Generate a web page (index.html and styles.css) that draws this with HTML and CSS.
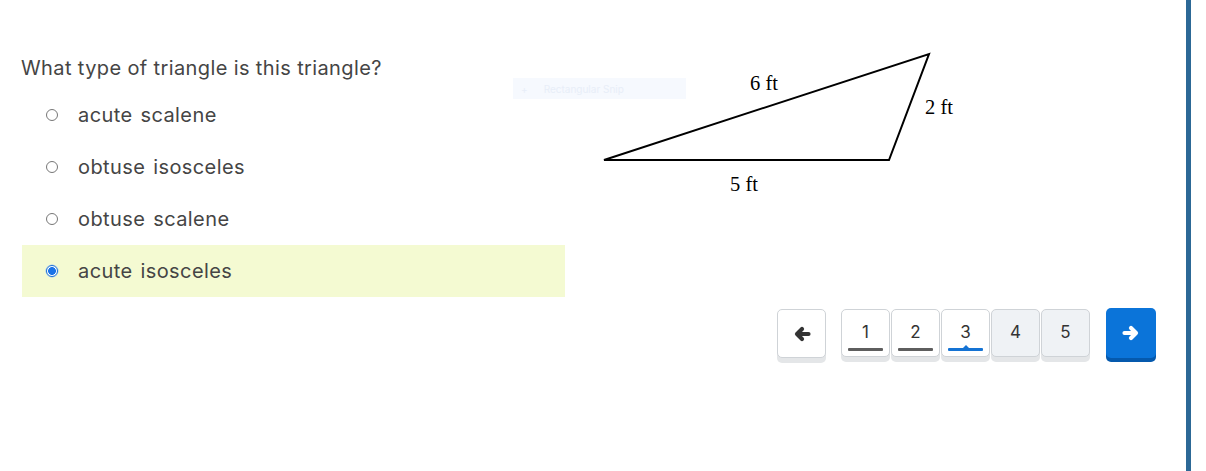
FILE: index.html
```html
<!DOCTYPE html>
<html>
<head>
<meta charset="utf-8">
<link rel="stylesheet" href="styles.css">
</head>
<body>
<div class="layout">
  <div class="content">
    <div class="quiz">
      <div class="left">
        <p class="question">What type of triangle is this triangle?</p>
        <div class="option"><span class="radio"></span><span class="label">acute scalene</span></div>
        <div class="option"><span class="radio"></span><span class="label">obtuse isosceles</span></div>
        <div class="option"><span class="radio"></span><span class="label">obtuse scalene</span></div>
        <div class="option selected"><span class="radio checked"></span><span class="label">acute isosceles</span></div>
      </div>
      <div class="right">
        <div class="figure">
          <div class="snip"><span class="snip-icon">+</span><span class="snip-text">Rectangular Snip</span></div>
          <svg class="tri" width="380" height="160" viewBox="0 0 380 160">
            <polygon points="14,120 299,120 339,14" fill="none" stroke="#000" stroke-width="2" stroke-linejoin="miter"/>
            <text x="160" y="50" class="lbl">6 ft</text>
            <text x="335" y="74" class="lbl">2 ft</text>
            <text x="140" y="151" class="lbl">5 ft</text>
          </svg>
        </div>
      </div>
    </div>
    <div class="pager">
      <button class="btn nav prev" aria-label="Previous">
        <svg width="20" height="16" viewBox="0 0 20 16"><path d="M16.5 8H5M10 3L5 8l5 5" fill="none" stroke="#333" stroke-width="4.2" stroke-linecap="round" stroke-linejoin="round"/></svg>
      </button>
      <div class="pages">
        <button class="btn pg done">1</button>
        <button class="btn pg done">2</button>
        <button class="btn pg current">3</button>
        <button class="btn pg todo">4</button>
        <button class="btn pg todo">5</button>
      </div>
      <button class="btn nav next" aria-label="Next">
        <svg width="20" height="16" viewBox="0 0 20 16"><path d="M3.5 8H15M10 3l5 5-5 5" fill="none" stroke="#fff" stroke-width="4.2" stroke-linecap="round" stroke-linejoin="round"/></svg>
      </button>
    </div>
  </div>
  <div class="edge"></div>
  <div class="gutter"></div>
</div>
</body>
</html>
```

FILE: styles.css
```css
* { box-sizing: border-box; }
html, body { margin: 0; padding: 0; background: #fff; }
body { font-family: "Inter", "Noto Sans", sans-serif; color: #444; }

.layout { display: flex; height: 471px; width: 1206px; overflow: hidden; }
.content { flex: 1; display: flex; flex-direction: column; }
.edge { width: 5px; background: #2c6896; }
.gutter { width: 15px; background: #fff; }

.quiz { display: flex; }
.left { width: 565px; padding-left: 22px; padding-top: 54px; }
.question { margin: 0 0 7px -1px; font-size: 20px; line-height: 28px; color: #454545; letter-spacing: 0.38px; }
.option { display: flex; align-items: center; height: 52px; padding-left: 24px; }
.option.selected { background: #f4fad2; }
.radio { width: 12px; height: 12px; border-radius: 50%; border: 1px solid #777; background: #fff; flex: none; }
.radio.checked { border: 1px solid #1a6fd8; background: radial-gradient(circle, #1a73e8 0 3.6px, #fff 4.2px); box-shadow: 0 0 0 0.5px #9cc2f0; }
.label { margin-left: 20px; font-size: 20px; color: #454545; letter-spacing: 0.4px; word-spacing: 2px; }

.right { flex: 1; }
.figure { position: relative; margin-top: 40px; margin-left: 25px; width: 380px; height: 160px; }
.tri { display: block; }
.lbl { font-family: "Liberation Serif", "Times New Roman", serif; font-size: 20.5px; fill: #000; }
.snip { position: absolute; left: -77px; top: 38px; width: 173px; height: 21px; background: #f6f9fe; display: flex; align-items: center; gap: 16px; padding-left: 8px; font-size: 10px; color: #e8eef8; }
.snip-icon { font-size: 10px; }

.pager { display: flex; justify-content: flex-end; align-items: flex-start; margin-top: 11px; padding-right: 30px; }
.pages { display: flex; gap: 1px; margin: 1px 16px 0 15px; }
.btn { font-family: "Inter", "Noto Sans", sans-serif; border: 1px solid #cfd3d7; border-radius: 5px; background: #fff; padding: 0; display: flex; align-items: center; justify-content: center; box-shadow: 0 5px 0 #e4e6e8; cursor: pointer; position: relative; }
.nav.prev { width: 49px; height: 49px; margin-top: 1px; }
.nav.next { width: 50px; height: 50px; background: #0b74d9; border: none; box-shadow: 0 4px 0 #0559ad; }
.pg { width: 49px; height: 48px; font-size: 17px; color: #333; padding-bottom: 2px; }
.pg.todo { background: #eff2f5; }
.pg.done::after, .pg.current::after { content: ""; position: absolute; left: 6px; right: 6px; bottom: 5px; height: 3px; background: #5e5e5e; border-radius: 1px; }
.pg.current::after { background: #1473d4; }
.pg.current::before { content: ""; position: absolute; left: 50%; bottom: 7px; margin-left: -4px; border-left: 4px solid transparent; border-right: 4px solid transparent; border-bottom: 4px solid #1473d4; }
```
